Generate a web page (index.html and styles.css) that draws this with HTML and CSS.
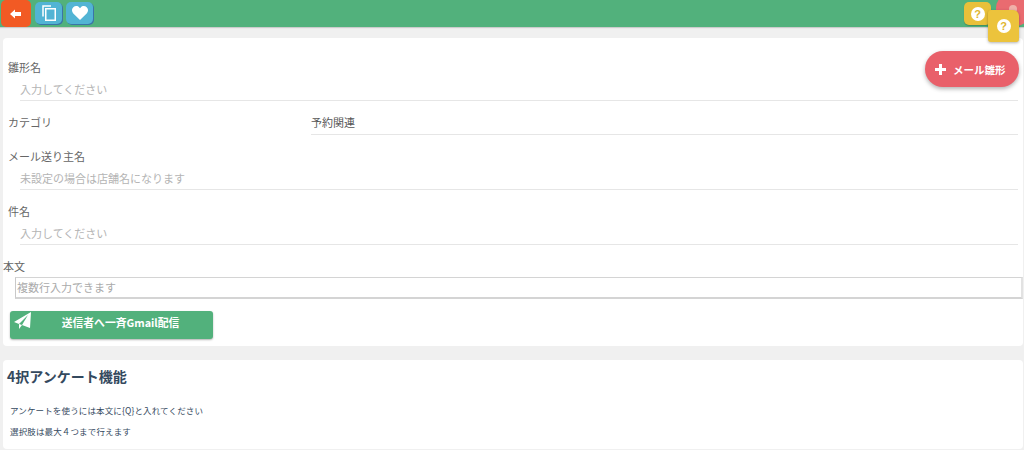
FILE: index.html
```html
<!DOCTYPE html>
<html lang="ja">
<head>
<meta charset="utf-8">
<title>メール雛形</title>
<link rel="stylesheet" href="styles.css">
</head>
<body>
<header class="topbar">
  <button class="tb back" aria-label="戻る">
    <svg width="12" height="10" viewBox="0 0 12 10"><path d="M0 5 5 .5V3h6v4H5v2.500z" fill="#fff"/></svg>
  </button>
  <button class="tb blue" aria-label="コピー">
    <svg width="14" height="16" viewBox="0 0 14 16" fill="none" stroke="#fff" stroke-width="1.500"><path d="M1 11.500V1h8"/><rect x="3.750" y="3.750" width="9.500" height="11.500"/></svg>
  </button>
  <button class="tb blue" aria-label="お気に入り">
    <svg width="16" height="14" viewBox="0 0 16 14"><path d="M8 14 1.300 7.400C-.5 5.500-.4 2.700 1.300 1.200 3 -.4 5.800-.3 7.300 1.400L8 2.200l.7-.8C10.200-.3 13-.4 14.700 1.200c1.700 1.500 1.800 4.300 0 6.200z" fill="#fff"/></svg>
  </button>
  <span class="spacer"></span>
  <button class="tb yellow" aria-label="ヘルプ"><span class="q">?</span></button>
</header>
<span class="red-round"><span class="red-dot"></span></span>
<button class="floating-help" aria-label="ヘルプ"><span class="q">?</span></button>

<main class="page">
  <section class="card form-card">
    <button class="add-btn"><span class="plus"></span>メール雛形</button>
    <div class="field first">
      <div class="label">雛形名</div>
      <div class="input">入力してください</div>
    </div>
    <div class="cat">
      <div class="cat-label">カテゴリ</div>
      <div class="cat-value">予約関連</div>
    </div>
    <div class="field">
      <div class="label">メール送り主名</div>
      <div class="input">未設定の場合は店舗名になります</div>
    </div>
    <div class="field">
      <div class="label">件名</div>
      <div class="input">入力してください</div>
    </div>
    <div class="body-label">本文</div>
    <div class="textarea">複数行入力できます</div>
    <button class="send">
      <svg class="plane" width="18" height="18" viewBox="0 0 18 18"><path d="M17 0 0 10l5 2v5l3-4 8 3z" fill="#fff"/><path d="M5 12 14 3 8 13" fill="#52b17c"/></svg>
      送信者へ一斉Gmail配信
    </button>
  </section>
  <section class="card survey">
    <h3>4択アンケート機能</h3>
    <p class="p1">アンケートを使うには本文に{Q}と入れてください</p>
    <p class="p2">選択肢は最大４つまで行えます</p>
  </section>
</main>
</body>
</html>
```
FILE: styles.css
```css
* { box-sizing: border-box; }
html, body { margin: 0; height: 450px; overflow: hidden; }
body {
  background: #f0f0f0;
  font-family: "Noto Sans CJK JP", "Noto Sans", sans-serif;
  color: #666;
  position: relative;
}
button { font-family: inherit; border: 0; padding: 0; }

.topbar {
  height: 27px;
  background: #52b17c;
  display: flex;
  align-items: flex-start;
  gap: 4px;
  padding-left: 1px;
  box-shadow: 0 1px 1px rgba(0,0,0,.15);
}
.tb {
  width: 27px;
  height: 22px;
  margin-top: 2px;
  border-radius: 5px;
  display: flex;
  align-items: center;
  justify-content: center;
}
.tb.back {
  width: 30px;
  height: 27px;
  margin-top: 0;
  background: #f25a24;
}
.tb.blue { background: #52b4d4; box-shadow: 1px 1px 0 #3b74a8; }
.spacer { flex: 1; }
.tb.yellow {
  width: 27px;
  height: 23px;
  margin-top: 2px;
  margin-right: 33px;
  background: #e9c03a;
  box-shadow: 0 1px 1px rgba(0,0,0,.2);
  position: relative;
  z-index: 2;
}
.red-round {
  position: absolute;
  left: 996px;
  top: -6px;
  width: 34px;
  height: 32px;
  background: #e96b70;
  border-radius: 14px;
  display: flex;
  justify-content: center;
}
.red-dot {
  width: 8px;
  height: 8px;
  margin-top: 11px;
  border-radius: 50%;
  background: #f0b0a8;
}
.floating-help {
  position: absolute;
  left: 988px;
  top: 10px;
  width: 31px;
  height: 32px;
  background: #ecc33c;
  border-radius: 3px 6px 3px 3px;
  display: flex;
  align-items: center;
  justify-content: center;
  box-shadow: 0 1px 3px rgba(0,0,0,.3);
  z-index: 3;
}
.q {
  width: 14px;
  height: 14px;
  border-radius: 50%;
  background: #fff;
  color: #e0b52f;
  font: 700 11px/14px "Liberation Sans", sans-serif;
  text-align: center;
  display: block;
}

.page { padding: 11px 1px 0 3px; }
.card { background: #fff; border-radius: 4px; position: relative; }
.form-card { height: 308px; padding: 22px 5px 0 5px; }

.add-btn {
  position: absolute;
  left: 922px;
  top: 13px;
  width: 94px;
  height: 36px;
  border-radius: 18px;
  background: #e9606a;
  color: #fff;
  font-size: 10.500px;
  font-weight: 700;
  display: flex;
  align-items: center;
  padding-left: 10px;
  gap: 7px;
  box-shadow: 0 2px 4px rgba(0,0,0,.3);
}
.plus {
  width: 11px;
  height: 11px;
  background:
    linear-gradient(#fff,#fff) center/11px 3px no-repeat,
    linear-gradient(#fff,#fff) center/3px 11px no-repeat;
}

.field { height: 55px; }
.label { font-size: 11px; line-height: 14px; }
.input {
  margin: 7px 0 0 12px;
  width: 998px;
  height: 20px;
  font-size: 11px;
  line-height: 17px;
  color: #b4b4b4;
  border-bottom: 1px solid #e6e6e6;
}

.cat { display: flex; height: 34px; }
.cat-label { width: 303px; font-size: 11px; line-height: 14px; }
.cat-value {
  width: 707px;
  height: 20px;
  font-size: 11px;
  line-height: 15px;
  color: #555;
  border-bottom: 1px solid #e6e6e6;
}
.body-label { margin: 0 0 0 -5px; font-size: 11px; line-height: 14px; }
.textarea {
  margin: 4px 0 0 7px;
  width: 1008px;
  height: 22px;
  border: 2px solid #e2e2e2;
  border-top: 1px solid #d4d4d4;
  border-bottom-color: #d4d4d4;
  border-left: 1px solid #c9c9c9;
  padding-left: 1px;
  font-size: 11px;
  line-height: 19px;
  color: #aaa;
}
.send {
  display: block;
  position: relative;
  margin: 12px 0 0 2px;
  width: 203px;
  height: 28px;
  background: #52b17c;
  border-radius: 3px;
  color: #fff;
  font-size: 10.800px;
  font-weight: 700;
  line-height: 22px;
  padding: 0 0 6px 18px;
  box-shadow: 0 1px 2px rgba(0,0,0,.3);
}
.plane { position: absolute; left: 4px; top: 1px; }

.survey { margin-top: 14px; height: 89px; padding: 6px 4px 0; }
.survey h3 {
  margin: 0;
  font-size: 14px;
  line-height: 20px;
  font-weight: 700;
  color: #34495e;
}
.survey p { margin: 0 0 0 3px; font-size: 8.500px; line-height: 12px; color: #34495e; letter-spacing: .14px; }
.survey .p1 { margin-top: 18px; }
.survey .p2 { margin-top: 9px; }
```
